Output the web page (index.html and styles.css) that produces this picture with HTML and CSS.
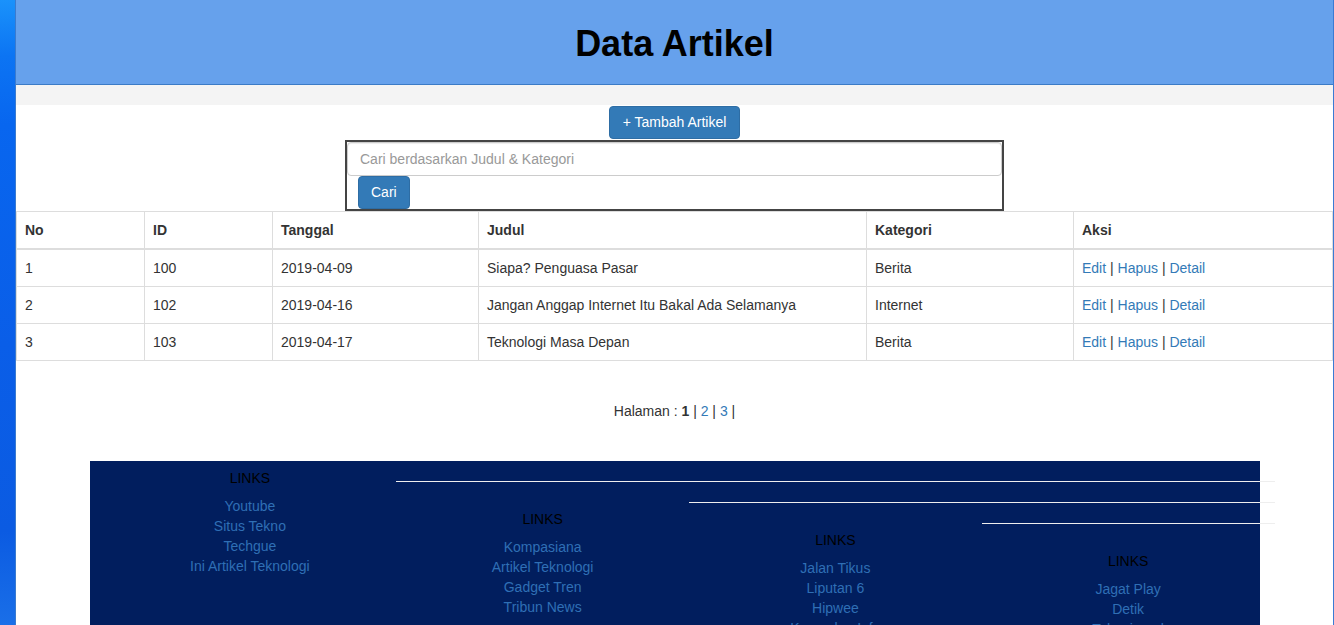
FILE: index.html
```html
<!DOCTYPE html>
<html lang="id">
<head>
<meta charset="utf-8">
<title>Data Artikel</title>
<link rel="stylesheet" href="styles.css">
</head>
<body>
<div class="screen">
  <div class="desk"></div>
  <div class="window">
    <header class="topbar"><h1 class="title">Data Artikel</h1></header>
    <div class="band"></div>
    <div class="actions"><a class="btn btn-primary" href="#">+ Tambah Artikel</a></div>
    <form class="search">
      <input class="form-control" type="text" placeholder="Cari berdasarkan Judul &amp; Kategori">
      <button class="btn btn-primary btn-cari" type="button">Cari</button>
    </form>
    <table class="table">
      <colgroup>
        <col class="c-no"><col class="c-id"><col class="c-tgl"><col class="c-judul"><col class="c-kat"><col>
      </colgroup>
      <thead>
        <tr><th>No</th><th>ID</th><th>Tanggal</th><th>Judul</th><th>Kategori</th><th>Aksi</th></tr>
      </thead>
      <tbody>
        <tr><td>1</td><td>100</td><td>2019-04-09</td><td>Siapa? Penguasa Pasar</td><td>Berita</td><td><a href="#">Edit</a> | <a href="#">Hapus</a> | <a href="#">Detail</a></td></tr>
        <tr><td>2</td><td>102</td><td>2019-04-16</td><td>Jangan Anggap Internet Itu Bakal Ada Selamanya</td><td>Internet</td><td><a href="#">Edit</a> | <a href="#">Hapus</a> | <a href="#">Detail</a></td></tr>
        <tr><td>3</td><td>103</td><td>2019-04-17</td><td>Teknologi Masa Depan</td><td>Berita</td><td><a href="#">Edit</a> | <a href="#">Hapus</a> | <a href="#">Detail</a></td></tr>
      </tbody>
    </table>
    <p class="pager">Halaman : <b>1</b> | <a href="#">2</a> | <a href="#">3</a> |</p>
    <footer class="footer">
      <div class="row">
        <div class="col">
          <p class="col-title">LINKS</p>
          <a href="#">Youtube</a><a href="#">Situs Tekno</a><a href="#">Techgue</a><a href="#">Ini Artikel Teknologi</a>
        </div>
        <hr>
        <div class="col">
          <p class="col-title">LINKS</p>
          <a href="#">Kompasiana</a><a href="#">Artikel Teknologi</a><a href="#">Gadget Tren</a><a href="#">Tribun News</a>
        </div>
        <hr>
        <div class="col">
          <p class="col-title">LINKS</p>
          <a href="#">Jalan Tikus</a><a href="#">Liputan 6</a><a href="#">Hipwee</a><a href="#">Kumpulan Info</a>
        </div>
        <hr>
        <div class="col">
          <p class="col-title">LINKS</p>
          <a href="#">Jagat Play</a><a href="#">Detik</a><a href="#">Teknojurnal</a><a href="#">Kompas Tekno</a>
        </div>
      </div>
    </footer>
  </div>
</div>
</body>
</html>
```
FILE: styles.css
```css
* { box-sizing: border-box; }
html, body { margin: 0; padding: 0; }
body {
  font-family: "Liberation Sans", Arial, Helvetica, sans-serif;
  font-size: 14px;
  line-height: 20px;
  color: #333;
  background: #fff;
}
a { color: #337ab7; text-decoration: none; }

.screen { display: flex; height: 625px; overflow: hidden; }
.desk {
  width: 15px;
  flex: none;
  background: linear-gradient(to bottom, #1a92fb 0%, #0c74f3 9%, #0866ef 20%, #0a5ee8 55%, #0b5be2 85%, #1a6fe8 100%);
}
.window {
  width: 1319px;
  flex: none;
  border-left: 1px solid #3a7bcf;
  border-right: 1px solid #3a7bd4;
  background: #fff;
}

.topbar {
  height: 85px;
  background: #66a1ec;
  border-bottom: 1px solid #3b7bc6;
  display: flex;
  align-items: center;
  justify-content: center;
  padding-top: 4px;
}
.title {
  margin: 0;
  font-size: 36px;
  line-height: 40px;
  font-weight: bold;
  color: #000;
}
.band { height: 20px; background: #f4f4f4; }

.actions { display: flex; justify-content: center; padding-top: 1px; }
.btn {
  display: inline-block;
  padding: 6px 12px;
  font-family: inherit;
  font-size: 14px;
  line-height: 20px;
  border: 1px solid transparent;
  border-radius: 4px;
  cursor: pointer;
}
.btn-primary { color: #fff; background: #337ab7; border-color: #2e6da4; }
.actions .btn { height: 33px; padding-top: 5px; width: 131px; text-align: center; }

.search {
  width: 659px;
  margin: 1px auto 0;
  border: 2px solid #444;
  height: 71px;
}
.form-control {
  display: block;
  width: 100%;
  height: 34px;
  padding: 6px 12px;
  font-family: inherit;
  font-size: 14px;
  line-height: 20px;
  color: #555;
  border: 1px solid #ccc;
  border-radius: 4px;
  box-shadow: inset 0 1px 1px rgba(0,0,0,.075);
}
.form-control::placeholder { color: #999; }
.btn-cari { margin-left: 11px; height: 33px; padding-top: 5px; }

.table {
  width: 100%;
  border-collapse: collapse;
  table-layout: fixed;
}
.c-no, .c-id { width: 128px; }
.c-tgl { width: 206px; }
.c-judul { width: 388px; }
.c-kat { width: 207px; }
.table th, .table td {
  border: 1px solid #ddd;
  padding: 8px;
  line-height: 20px;
  text-align: left;
  vertical-align: top;
}
.table th { font-weight: bold; border-bottom-width: 2px; }

.pager { text-align: center; margin: 40px 0 40px; }
.pager b { font-weight: bold; }

.footer {
  width: 1170px;
  margin: 0 auto;
  background: #011e5e;
  height: 300px;
}
.row {
  display: flow-root;
  margin-left: 14px;
  margin-right: -15px;
}
.col {
  float: left;
  width: 25%;
  padding-top: 7px;
  text-align: center;
}
.col-title { margin: 0 0 8px; color: #000; }
.col a { display: block; color: #2f6fb5; }
.row hr {
  display: block;
  overflow: hidden;
  height: 0;
  margin: 20px 0;
  border: 0;
  border-top: 1px solid #eee;
}
```
